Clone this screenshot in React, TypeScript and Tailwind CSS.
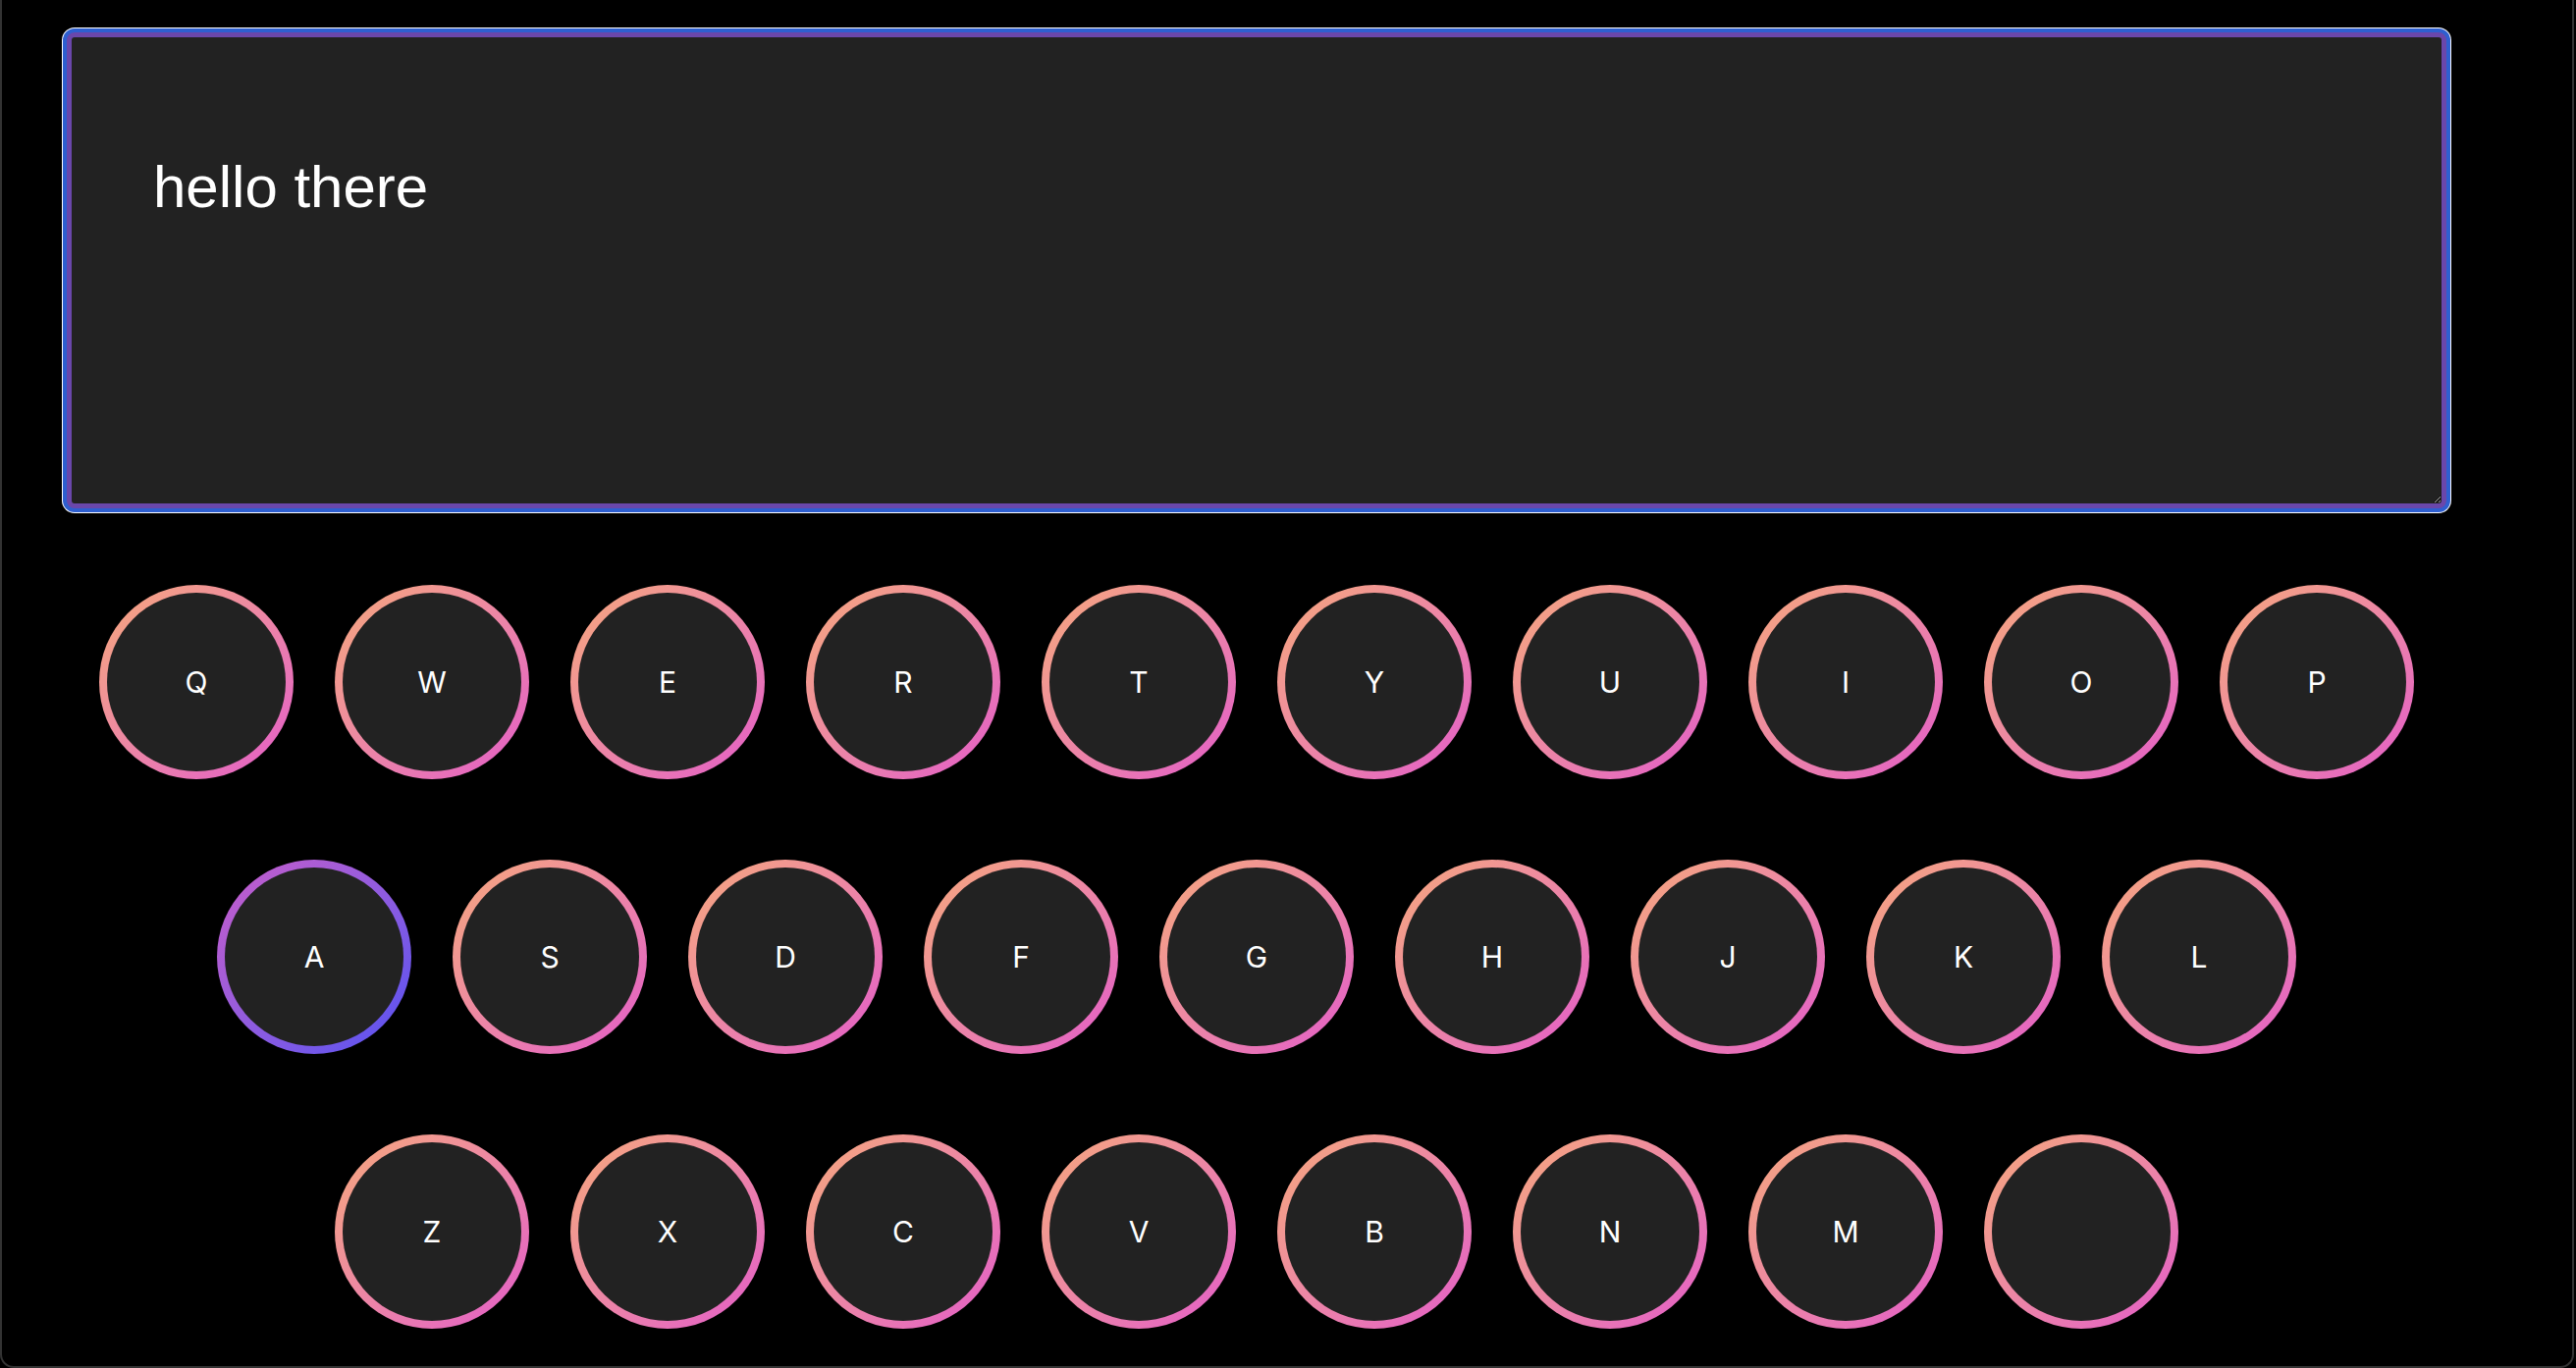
import React, { useState } from "react";

const rows = [
  ["Q", "W", "E", "R", "T", "Y", "U", "I", "O", "P"],
  ["A", "S", "D", "F", "G", "H", "J", "K", "L"],
  ["Z", "X", "C", "V", "B", "N", "M", " "],
];

function Key({ label, active }: { label: string; active: boolean }) {
  return (
    <button
      className={
        "w-[198px] h-[198px] rounded-full p-[8px] bg-gradient-to-br " +
        (active ? "from-[#c95bc9] to-[#5450f2]" : "from-[#f6a878] to-[#e35ac8]")
      }
    >
      <div className="w-full h-full rounded-full bg-[#222222] flex items-center justify-center text-white text-[30px] font-['Inter',sans-serif]">
        {label}
      </div>
    </button>
  );
}

export default function App() {
  const [text, setText] = useState("hello there");

  return (
    <div className="w-[2624px] h-[1394px] bg-black overflow-hidden">
      <div className="w-[2622px] h-[1394px] border-2 border-t-0 border-[#333333] rounded-b-[14px] bg-black">
        <div className="w-[2556px] flex flex-col items-center pt-[33px]">
          <textarea
            value={text}
            onChange={(e) => setText(e.target.value)}
            className="w-[2424px] h-[485px] block bg-[#222222] text-white text-[60px] leading-[69px] font-['Liberation_Sans',Arial,sans-serif] pl-[83px] pt-[118px] pr-[40px] rounded-lg border-[5px] border-[#6a47ab] outline-none shadow-[0_0_0_4px_#2e5fd0,0_0_0_5px_#ffffff]"
          />
          <div className="mt-[78px] flex flex-col items-center gap-[82px]">
            {rows.map((row, i) => (
              <div key={i} className="flex gap-[42px]">
                {row.map((k, j) => (
                  <Key key={j} label={k} active={k === "A"} />
                ))}
              </div>
            ))}
          </div>
        </div>
      </div>
    </div>
  );
}
